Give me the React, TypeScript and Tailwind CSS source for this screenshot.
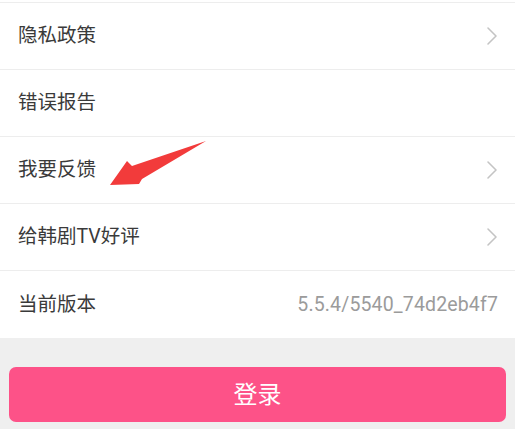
import React from 'react';

type Row = { label: string; chevron?: boolean; value?: string };

const rows: Row[] = [
  { label: '隐私政策', chevron: true },
  { label: '错误报告' },
  { label: '我要反馈', chevron: true },
  { label: '给韩剧TV好评', chevron: true },
  { label: '当前版本', value: '5.5.4/5540_74d2eb4f7' },
];

const font = { fontFamily: 'Roboto, "Noto Sans CJK SC", sans-serif' };

function Chevron() {
  return (
    <svg width="12" height="20" viewBox="0 0 12 20" fill="none">
      <path d="M2 2 L10 10 L2 18" stroke="#c4c4c4" strokeWidth="1.6" strokeLinecap="round" strokeLinejoin="round" />
    </svg>
  );
}

function SettingRow({ row, last }: { row: Row; last: boolean }) {
  return (
    <div className={`flex items-center justify-between h-[67px] pl-[18px] pr-[17px] bg-white ${last ? 'h-[66px]' : 'border-b border-[#ededed]'}`}>
      <span className="text-[19.5px] text-[#3a3a3a] leading-none">{row.label}</span>
      {row.chevron && <Chevron />}
      {row.value && (
        <span className="text-[19.5px] text-[#9b9b9b] leading-none tracking-[0.15px]">{row.value}</span>
      )}
    </div>
  );
}

export default function App() {
  return (
    <div className="relative w-[515px] h-[429px] bg-[#efefef] overflow-hidden" style={font}>
      <div className="h-[3px] bg-white border-b border-[#ededed]" />
      <div className="flex flex-col">
        {rows.map((r, i) => (
          <SettingRow key={r.label} row={r} last={i === rows.length - 1} />
        ))}
      </div>
      <div className="px-[9px] pt-[29px]">
        <button
          type="button"
          className="flex items-center justify-center w-full h-[55px] rounded-[7px] bg-[#fd5288] text-white text-[24px] leading-none"
        >
          登录
        </button>
      </div>

      {/* 注釈の矢印 */}
      <svg className="absolute left-0 top-0 pointer-events-none" width="515" height="429">
        <polygon
          points="206,141 142,179 139,184 110,185 127,161 132,166"
          fill="#f23b3b"
        />
      </svg>
    </div>
  );
}
